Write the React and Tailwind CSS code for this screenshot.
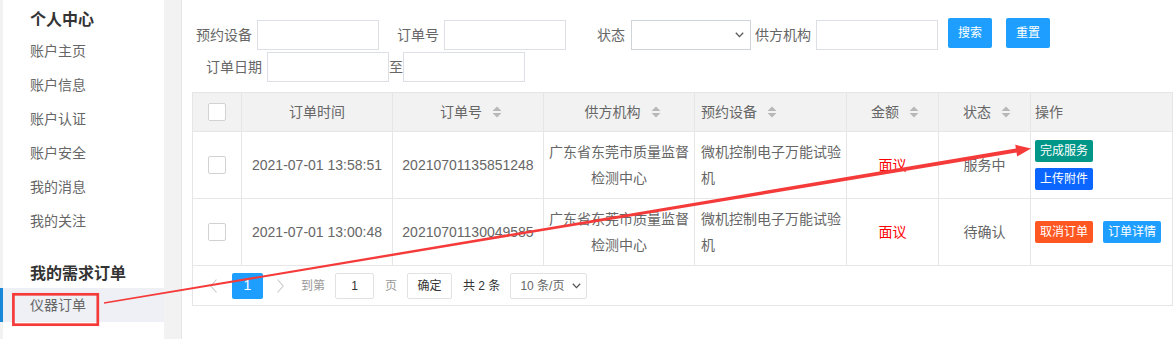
import React from "react";

const SortIcon = () => (
  <svg width="10" height="12" viewBox="0 0 10 12" className="ml-[10px] shrink-0">
    <path d="M0.5 5 L5 0.5 L9.5 5 Z" fill="#b8b8b8" />
    <path d="M0.5 7 L5 11.5 L9.5 7 Z" fill="#b8b8b8" />
  </svg>
);

const Chevron = ({ className }) => (
  <svg width="9" height="6" viewBox="0 0 9 6" className={className}>
    <path d="M0.8 0.8 L4.5 4.6 L8.2 0.8" fill="none" stroke="#555" strokeWidth="1.3" />
  </svg>
);

const Checkbox = () => (
  <div className="w-[18px] h-[18px] border border-[#d2d2d2] rounded-[2px] bg-white" />
);

const Input = ({ w = "w-[122px]" }) => (
  <div className={`${w} h-[30px] border border-[#dcdfe6] bg-white shrink-0`} />
);

const headCell =
  "h-[39px] border-b border-r border-[#e6e6e6] bg-[#f2f2f2] flex items-center text-[14px] text-[#666]";
const bodyCell =
  "h-[67px] border-b border-r border-[#e6e6e6] flex items-center text-[14px] text-[#666] leading-[26px]";

const Btn = ({ color, children, className = "" }) => (
  <div
    className={`${color} ${className} h-[22px] w-[58px] rounded-[2px] text-white text-[12px] flex items-center justify-center`}
  >
    {children}
  </div>
);

export default function App() {
  const font = "font-['Liberation_Sans','Noto_Sans_CJK_SC',sans-serif]";
  return (
    <div className={`${font} relative w-[1175px] h-[339px] bg-[#f2f2f2] flex overflow-hidden`}>
      {/* Sidebar */}
      <div className="w-[164px] h-full shrink-0 bg-white border-l-[3px] border-[#f2f2f2] flex flex-col">
        <div className="h-[34px] pl-[27px] pt-[8px] leading-[24px] text-[16px] font-bold text-[#333]">个人中心</div>
        {["账户主页", "账户信息", "账户认证", "账户安全", "我的消息", "我的关注"].map((t) => (
          <div key={t} className="h-[34px] pl-[27px] flex items-center text-[14px] text-[#666]">
            {t}
          </div>
        ))}
        <div className="h-[50px] pl-[27px] pt-[24px] leading-[24px] text-[16px] font-bold text-[#333]">我的需求订单</div>
        <div className="h-[34px] -ml-[3px] border-l-[3px] border-[#1a88d8] bg-[#eef0f5] pl-[27px] flex items-center text-[14px] text-[#666]">
          仪器订单
        </div>
      </div>

      {/* Main */}
      <div className="ml-[17px] flex-1 h-full bg-white border-l border-[#e6e6e6] pl-[10px]">
        {/* Filter row 1 */}
        <div className="flex items-start pt-[18px] pl-[4px] text-[14px] text-[#666]">
          <div className="mt-[2px] h-[30px] leading-[30px]">预约设备</div>
          <div className="mt-[2px] ml-[5px]"><Input /></div>
          <div className="mt-[2px] ml-[18px] h-[30px] leading-[30px]">订单号</div>
          <div className="mt-[2px] ml-[5px]"><Input /></div>
          <div className="mt-[2px] ml-[31px] h-[30px] leading-[30px]">状态</div>
          <div className="mt-[2px] ml-[6px] w-[120px] h-[30px] border border-[#cfd3da] bg-white flex items-center justify-end pr-[6px]">
            <Chevron />
          </div>
          <div className="mt-[2px] ml-[4px] h-[30px] leading-[30px]">供方机构</div>
          <div className="mt-[2px] ml-[5px]"><Input /></div>
          <div className="ml-[10px] w-[44px] h-[30px] rounded-[2px] bg-[#1e9fff] text-white text-[12px] flex items-center justify-center">搜索</div>
          <div className="ml-[14px] w-[44px] h-[30px] rounded-[2px] bg-[#1e9fff] text-white text-[12px] flex items-center justify-center">重置</div>
        </div>
        {/* Filter row 2 */}
        <div className="flex items-start pl-[14px] text-[14px] text-[#666]">
          <div className="mt-[2px] h-[30px] leading-[30px]">订单日期</div>
          <div className="mt-[2px] ml-[5px]"><Input /></div>
          <div className="mt-[2px] h-[30px] leading-[30px]">至</div>
          <div className="mt-[2px]"><Input /></div>
        </div>

        {/* Table */}
        <div className="mt-[10px] w-[981px] border border-[#e6e6e6]">
          <div className="grid grid-cols-[49px_151px_151px_151px_152px_92px_92px_141px]">
            {/* header */}
            <div className={`${headCell} justify-center`}><Checkbox /></div>
            <div className={`${headCell} justify-center`}>订单时间</div>
            <div className={`${headCell} justify-center pl-[6px]`}>订单号<SortIcon /></div>
            <div className={`${headCell} justify-center pl-[7px]`}>供方机构<SortIcon /></div>
            <div className={`${headCell} pl-[6px]`}>预约设备<SortIcon /></div>
            <div className={`${headCell} justify-center pl-[5px]`}>金额<SortIcon /></div>
            <div className={`${headCell} justify-center pl-[5px]`}>状态<SortIcon /></div>
            <div className={`${headCell} border-r-0 pl-[4px]`}>操作</div>

            {/* row 1 */}
            <div className={`${bodyCell} justify-center`}><Checkbox /></div>
            <div className={`${bodyCell} justify-center`}>2021-07-01 13:58:51</div>
            <div className={`${bodyCell} justify-center`}>20210701135851248</div>
            <div className={`${bodyCell} justify-center text-center whitespace-nowrap`}>
              <div>广东省东莞市质量监督<br />检测中心</div>
            </div>
            <div className={`${bodyCell} pl-[6px] whitespace-nowrap`}>
              <div>微机控制电子万能试验<br />机</div>
            </div>
            <div className={`${bodyCell} justify-center text-[#ff0000]`}>面议</div>
            <div className={`${bodyCell} justify-center`}>服务中</div>
            <div className={`${bodyCell} border-r-0 pl-[4px] flex-col items-start justify-center gap-[6px]`}>
              <Btn color="bg-[#009688]">完成服务</Btn>
              <Btn color="bg-[#0a66ff]">上传附件</Btn>
            </div>

            {/* row 2 */}
            <div className={`${bodyCell} justify-center`}><Checkbox /></div>
            <div className={`${bodyCell} justify-center`}>2021-07-01 13:00:48</div>
            <div className={`${bodyCell} justify-center`}>20210701130049585</div>
            <div className={`${bodyCell} justify-center text-center whitespace-nowrap`}>
              <div>广东省东莞市质量监督<br />检测中心</div>
            </div>
            <div className={`${bodyCell} pl-[6px] whitespace-nowrap`}>
              <div>微机控制电子万能试验<br />机</div>
            </div>
            <div className={`${bodyCell} justify-center text-[#ff0000]`}>面议</div>
            <div className={`${bodyCell} justify-center`}>待确认</div>
            <div className={`${bodyCell} border-r-0 pl-[4px]`}>
              <Btn color="bg-[#ff5722]">取消订单</Btn>
              <Btn color="bg-[#1e9fff]" className="ml-[10px]">订单详情</Btn>
            </div>
          </div>

          {/* pagination */}
          <div className="h-[39px] flex items-center text-[12px]">
            <svg width="7" height="14" viewBox="0 0 7 14" className="ml-[17px]">
              <path d="M6.5 0.5 L0.8 7 L6.5 13.5" fill="none" stroke="#c9c9c9" strokeWidth="1.1" />
            </svg>
            <div className="ml-[15px] w-[31px] h-[26px] rounded-[2px] bg-[#1e9fff] text-white text-[14px] flex items-center justify-center">1</div>
            <svg width="7" height="14" viewBox="0 0 7 14" className="ml-[14px]">
              <path d="M0.5 0.5 L6.2 7 L0.5 13.5" fill="none" stroke="#c9c9c9" strokeWidth="1.1" />
            </svg>
            <div className="ml-[17px] text-[#999]">到第</div>
            <div className="ml-[10px] w-[39px] h-[26px] border border-[#e2e2e2] rounded-[2px] flex items-center justify-center text-[#333]">1</div>
            <div className="ml-[11px] text-[#999]">页</div>
            <div className="ml-[10px] w-[45px] h-[26px] border border-[#e2e2e2] rounded-[2px] flex items-center justify-center text-[#333]">确定</div>
            <div className="ml-[11px] text-[#333] whitespace-pre">共 2 条</div>
            <div className="ml-[10px] w-[77px] h-[26px] border border-[#e2e2e2] rounded-[2px] flex items-center justify-between pl-[9px] pr-[5px] text-[#666]">
              <span>10 条/页</span>
              <Chevron />
            </div>
          </div>
        </div>
      </div>

      {/* annotation overlay */}
      <svg
        className="absolute inset-0 pointer-events-none"
        width="1175"
        height="339"
        viewBox="0 0 1175 339"
      >
        <rect x="13.4" y="294.3" width="84.4" height="30.4" fill="none" stroke="#f53a3a" strokeWidth="2.7" />
        <polygon
          points="103.9,302.2 1015.9,148.6 1015.2,144.7 1031,148.5 1017.2,156.5 1016.5,152.6 104.1,303.8"
          fill="#f53a3a"
        />
      </svg>
    </div>
  );
}
